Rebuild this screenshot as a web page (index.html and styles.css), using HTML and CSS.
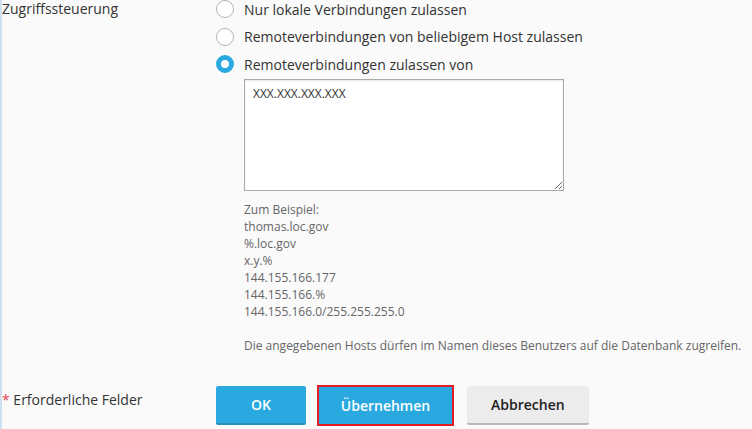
FILE: index.html
```html
<!DOCTYPE html>
<html lang="de">
  <head>
    <meta charset="UTF-8" />
    <meta name="viewport" content="width=device-width, initial-scale=1.0" />
    <title>Zugriffssteuerung</title>
    <link rel="stylesheet" href="styles.css">
  </head>
  <body>
    <form class="form">
      <div class="form-row">
        <div class="field-label">Zugriffssteuerung</div>
        <div class="field">
          <label class="option">
            <input type="radio" name="access" value="local" />
            <span>Nur lokale Verbindungen zulassen</span>
          </label>
          <label class="option">
            <input type="radio" name="access" value="any" />
            <span>Remoteverbindungen von beliebigem Host zulassen</span>
          </label>
          <label class="option">
            <input type="radio" name="access" value="list" checked />
            <span>Remoteverbindungen zulassen von</span>
          </label>

          <textarea class="hosts">XXX.XXX.XXX.XXX</textarea>

          <div class="hint">
            <p>Zum Beispiel:<br />
              thomas.loc.gov<br />
              %.loc.gov<br />
              x.y.%<br />
              144.155.166.177<br />
              144.155.166.%<br />
              144.155.166.0/255.255.255.0</p>
            <p>Die angegebenen Hosts dürfen im Namen dieses Benutzers auf die Datenbank zugreifen.</p>
          </div>
        </div>
      </div>

      <div class="form-row actions">
        <div class="field-label required"><span class="star">*</span> Erforderliche Felder</div>
        <div class="buttons">
          <button type="button" class="btn btn-primary">OK</button>
          <!-- red frame marks the button in question -->
          <span class="marked">
            <button type="button" class="btn btn-primary">Übernehmen</button>
          </span>
          <button type="button" class="btn">Abbrechen</button>
        </div>
      </div>
    </form>
  </body>
</html>
```

FILE: styles.css
```css
* {
  margin: 0;
  padding: 0;
  box-sizing: border-box;
}
body {
  background: #fafafa;
  border-left: 2px solid #cfe0f1;
  min-height: 100vh;
  font-family: "Open Sans", "DejaVu Sans", sans-serif;
  font-size: 14px;
  color: #333;
}
.form-row {
  display: grid;
  grid-template-columns: 214px 1fr;
}
.field-label {
  line-height: 18px;
  color: #333;
}
.option {
  display: flex;
  align-items: center;
  height: 18px;
  margin-bottom: 9.5px;
  cursor: pointer;
}
.option input {
  appearance: none;
  width: 18px;
  height: 18px;
  border: 1px solid #b5b5b5;
  border-radius: 50%;
  background: #fff;
  margin-right: 10px;
}
.option input:checked {
  border: 5px solid #29a9df;
}
.hosts {
  display: block;
  width: 320px;
  height: 112px;
  margin: -3.5px 0 0 28px;
  padding: 5px 8px;
  border: 1px solid #aaa;
  box-shadow: inset 0 1px 2px rgba(0, 0, 0, 0.1);
  background: #fff;
  font-family: "Open Sans", "DejaVu Sans", sans-serif;
  font-size: 12px;
  color: #333;
}
.hint {
  margin: 10px 0 0 28px;
  font-size: 12px;
  line-height: 17px;
  color: #666;
}
.hint p + p {
  margin-top: 17px;
}
.actions {
  margin-top: 32px;
}
.required {
  padding-top: 5px;
}
.star {
  color: #e2434e;
}
.buttons {
  display: flex;
  align-items: flex-start;
  gap: 12px;
}
.btn {
  min-width: 90px;
  height: 39px;
  padding: 0 24px;
  border: 0;
  border-bottom: 2px solid #b9b9b9;
  border-radius: 2px;
  background: #ececec;
  font-family: "Open Sans", "DejaVu Sans", sans-serif;
  font-size: 14px;
  font-weight: 600;
  color: #222;
}
.btn-primary {
  background: #29a9df;
  border-bottom-color: #2a8fba;
  color: #fff;
}
.marked {
  display: flex;
  margin: -1px 1px 0 -1px;
  border: 2px solid #e31c24;
}
.marked .btn {
  width: 133px;
  height: 37px;
  padding: 0 20px;
  border-radius: 0;
  border-bottom: 0;
}
```
